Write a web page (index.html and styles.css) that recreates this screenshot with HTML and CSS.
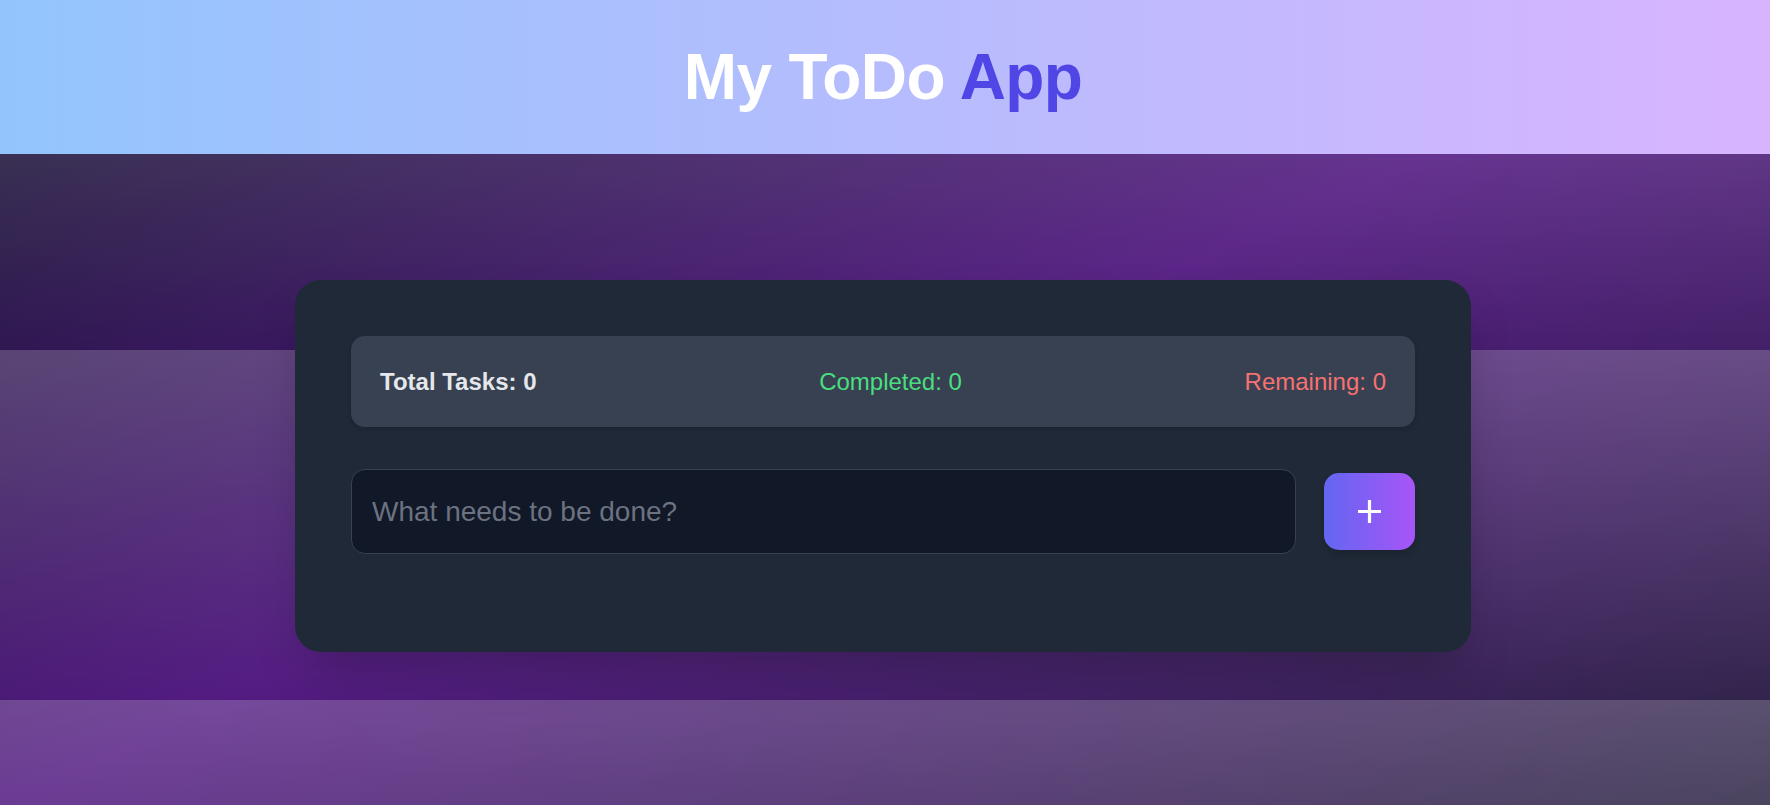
FILE: index.html
```html
<!DOCTYPE html>
<html lang="en">
<head>
<meta charset="utf-8">
<title>My ToDo App</title>
<link rel="stylesheet" href="styles.css">
</head>
<body>
<div class="page">
  <header class="app-header">
    <h1 class="app-title">My ToDo <span class="accent">App</span></h1>
  </header>
  <main class="main">
    <section class="card">
      <div class="stats">
        <span class="stat stat-total">Total Tasks: 0</span>
        <span class="stat stat-done">Completed: 0</span>
        <span class="stat stat-left">Remaining: 0</span>
      </div>
      <form class="add-form" onsubmit="return false;">
        <input class="task-input" type="text" placeholder="What needs to be done?">
        <button class="add-btn" type="submit" aria-label="Add task">
          <svg width="23" height="23" viewBox="0 0 23 23" aria-hidden="true">
            <path d="M11.5 0v23M0 11.5h23" stroke="#ffffff" stroke-width="3.2" fill="none"/>
          </svg>
        </button>
      </form>
      <ul class="task-list"></ul>
    </section>
  </main>
</div>
</body>
</html>
```

FILE: styles.css
```css
* { box-sizing: border-box; }

html, body {
  margin: 0;
  padding: 0;
}

body {
  font-family: "Liberation Sans", Arial, sans-serif;
}

.page {
  min-height: 100vh;
  background:
    linear-gradient(to bottom, rgba(255,255,255,0.2), rgba(255,255,255,0)) 0 0 / 100% 350px repeat-y,
    linear-gradient(to bottom right, #14142d 0%, #531b82 50%, #2d2644 100%) 0 0 / 100% 100% no-repeat;
}

.app-header {
  background: linear-gradient(to right, #93c5fd, #d8b4fe);
  padding: 40px 4px 40px 0;
  text-align: center;
}

.app-title {
  margin: 0;
  font-size: 64px;
  font-weight: 700;
  line-height: normal;
  letter-spacing: -0.6px;
  color: #ffffff;
}

.accent { color: #4f46e5; }

.main {
  padding: 126px 4px 0 0;
  display: flex;
  justify-content: center;
}

.card {
  width: 1176px;
  background: #1f2937;
  border-radius: 26px;
  padding: 56px;
  display: flex;
  flex-direction: column;
  gap: 42px;
  box-shadow: 0 25px 50px -12px rgba(0,0,0,0.25);
}

.stats {
  display: flex;
  justify-content: space-between;
  align-items: center;
  background: #374151;
  border-radius: 14px;
  padding: 32px 29px;
  font-size: 24px;
  line-height: 27px;
  box-shadow: 0 2px 4px rgba(0,0,0,0.12);
}

.stat-total { color: #e5e7eb; font-weight: 700; }
.stat-done { color: #4ade80; }
.stat-left { color: #f87171; }

.add-form {
  display: flex;
  align-items: center;
  gap: 28px;
  margin: 0;
}

.task-input {
  flex: 1;
  height: 85px;
  background: #111827;
  border: 1px solid #374151;
  border-radius: 14px;
  padding: 0 20px;
  font-family: "Liberation Sans", Arial, sans-serif;
  font-size: 28px;
  color: #e5e7eb;
  outline: none;
}

.task-input::placeholder { color: #6b7280; }

.add-btn {
  width: 91px;
  height: 77px;
  border: none;
  border-radius: 15px;
  background: linear-gradient(to right, #6366f1, #a855f7);
  display: flex;
  align-items: center;
  justify-content: center;
  padding: 0;
  cursor: pointer;
  box-shadow: 0 4px 6px rgba(0,0,0,0.15);
}

.add-btn svg { display: block; }

.task-list {
  list-style: none;
  margin: 0;
  padding: 0;
}
```
